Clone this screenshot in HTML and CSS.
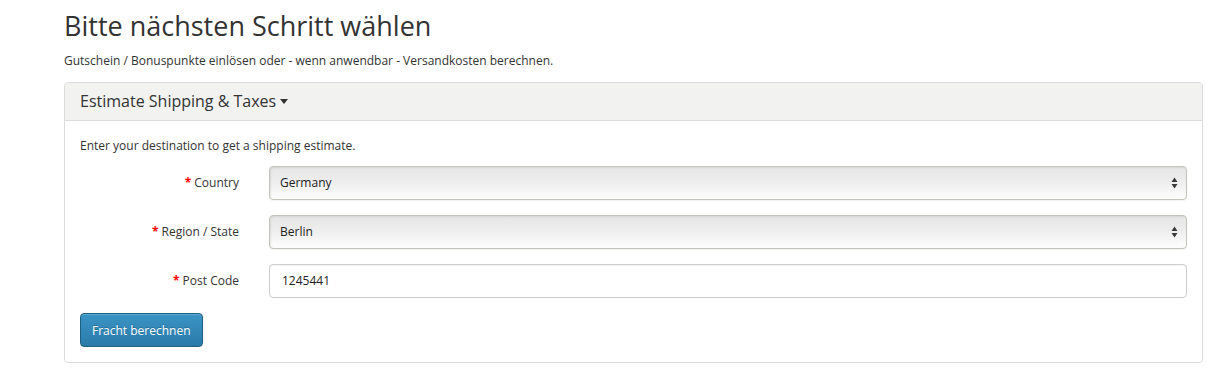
FILE: index.html
```html
<!DOCTYPE html>
<html lang="de">
<head>
<meta charset="utf-8">
<title>Warenkorb</title>
<link rel="stylesheet" href="styles.css">
</head>
<body>
<div class="container">
  <h1 class="page-title">Bitte nächsten Schritt wählen</h1>
  <p class="intro">Gutschein / Bonuspunkte einlösen oder - wenn anwendbar - Versandkosten berechnen.</p>
  <div class="panel">
    <div class="panel-heading">
      <h4 class="panel-title">Estimate Shipping &amp; Taxes <span class="caret"></span></h4>
    </div>
    <div class="panel-body">
      <p class="hint">Enter your destination to get a shipping estimate.</p>
      <form class="form-horizontal">
        <div class="form-group">
          <label class="control-label"><span class="req">*</span> Country</label>
          <div class="control">
            <div class="select-box"><span>Germany</span><svg class="updown" width="7" height="12" viewBox="0 0 7 12"><path d="M3.5 0.5 L6.5 5 L0.5 5 Z M0.5 7 L6.5 7 L3.5 11.5 Z" fill="#3a3a3a"/></svg></div>
          </div>
        </div>
        <div class="form-group">
          <label class="control-label"><span class="req">*</span> Region / State</label>
          <div class="control">
            <div class="select-box"><span>Berlin</span><svg class="updown" width="7" height="12" viewBox="0 0 7 12"><path d="M3.5 0.5 L6.5 5 L0.5 5 Z M0.5 7 L6.5 7 L3.5 11.5 Z" fill="#3a3a3a"/></svg></div>
          </div>
        </div>
        <div class="form-group">
          <label class="control-label"><span class="req">*</span> Post Code</label>
          <div class="control">
            <div class="text-input">1245441</div>
          </div>
        </div>
        <button type="button" class="btn-primary">Fracht berechnen</button>
      </form>
    </div>
  </div>
</div>
</body>
</html>
```
FILE: styles.css
```css
* { box-sizing: border-box; }
html, body { margin: 0; padding: 0; background: #fff; }
body {
  font-family: "Open Sans", "DejaVu Sans", sans-serif;
  font-size: 12px;
  line-height: 20px;
  color: #333;
}
.container {
  padding: 0 20px 0 64px;
}
.page-title {
  margin: 8px 0 0;
  font-size: 27px;
  font-weight: 400;
  line-height: 36px;
  color: #333;
}
.intro {
  margin: 7px 0 0;
  line-height: 20px;
}
.panel {
  margin-top: 11px;
  border: 1px solid #dcdcdc;
  border-radius: 4px;
  width: 1139px;
}
.panel-heading {
  background: #f2f2f0;
  border-bottom: 1px solid #dcdcdc;
  border-radius: 3px 3px 0 0;
  padding: 9px 15px 9px;
}
.panel-title {
  margin: 0;
  font-size: 16px;
  font-weight: 400;
  line-height: 19px;
  color: #333;
}
.caret {
  display: inline-block;
  width: 0;
  height: 0;
  margin-left: 0;
  vertical-align: middle;
  border-top: 5px solid #333;
  border-left: 4.5px solid transparent;
  border-right: 4.5px solid transparent;
  position: relative;
  top: -1px;
}
.panel-body {
  padding: 15px;
}
.hint {
  margin: 0 0 10px;
}
.form-group {
  display: flex;
  align-items: center;
  margin-bottom: 15px;
}
.control-label {
  width: 174px;
  text-align: right;
  padding-right: 15px;
  flex: none;
}
.req { color: #f00; font-weight: 700; }
.control {
  flex: 1;
  padding-left: 15px;
}
.select-box {
  height: 34px;
  border: 1px solid #c4c3bd;
  border-radius: 4px;
  background: linear-gradient(to bottom, #e6e6e6 0%, #ececec 40%, #fdfdfd 100%);
  box-shadow: inset 1px 1px 2px rgba(0,0,0,0.08), 0 1px 1px rgba(0,0,0,0.06);
  display: flex;
  align-items: center;
  justify-content: space-between;
  padding: 0 8px 0 10px;
  font-size: 12px;
  color: #222;
}
.updown { flex: none; }
.text-input {
  height: 34px;
  border: 1px solid #ccc;
  border-radius: 4px;
  padding: 0 12px;
  display: flex;
  align-items: center;
  color: #222;
  box-shadow: inset 0 1px 1px rgba(0,0,0,0.05);
}
.btn-primary {
  display: block;
  font-family: inherit;
  font-size: 12px;
  line-height: 17px;
  height: 34px;
  padding: 7px 11px;
  color: #fff;
  border: 1px solid #1f5f82;
  border-radius: 4px;
  background: linear-gradient(to bottom, #3b95c5 0%, #2a7aa9 100%);
  text-shadow: 0 -1px 0 rgba(0,0,0,0.2);
  box-shadow: inset 0 1px 0 rgba(255,255,255,0.2);
  white-space: nowrap;
}
```
